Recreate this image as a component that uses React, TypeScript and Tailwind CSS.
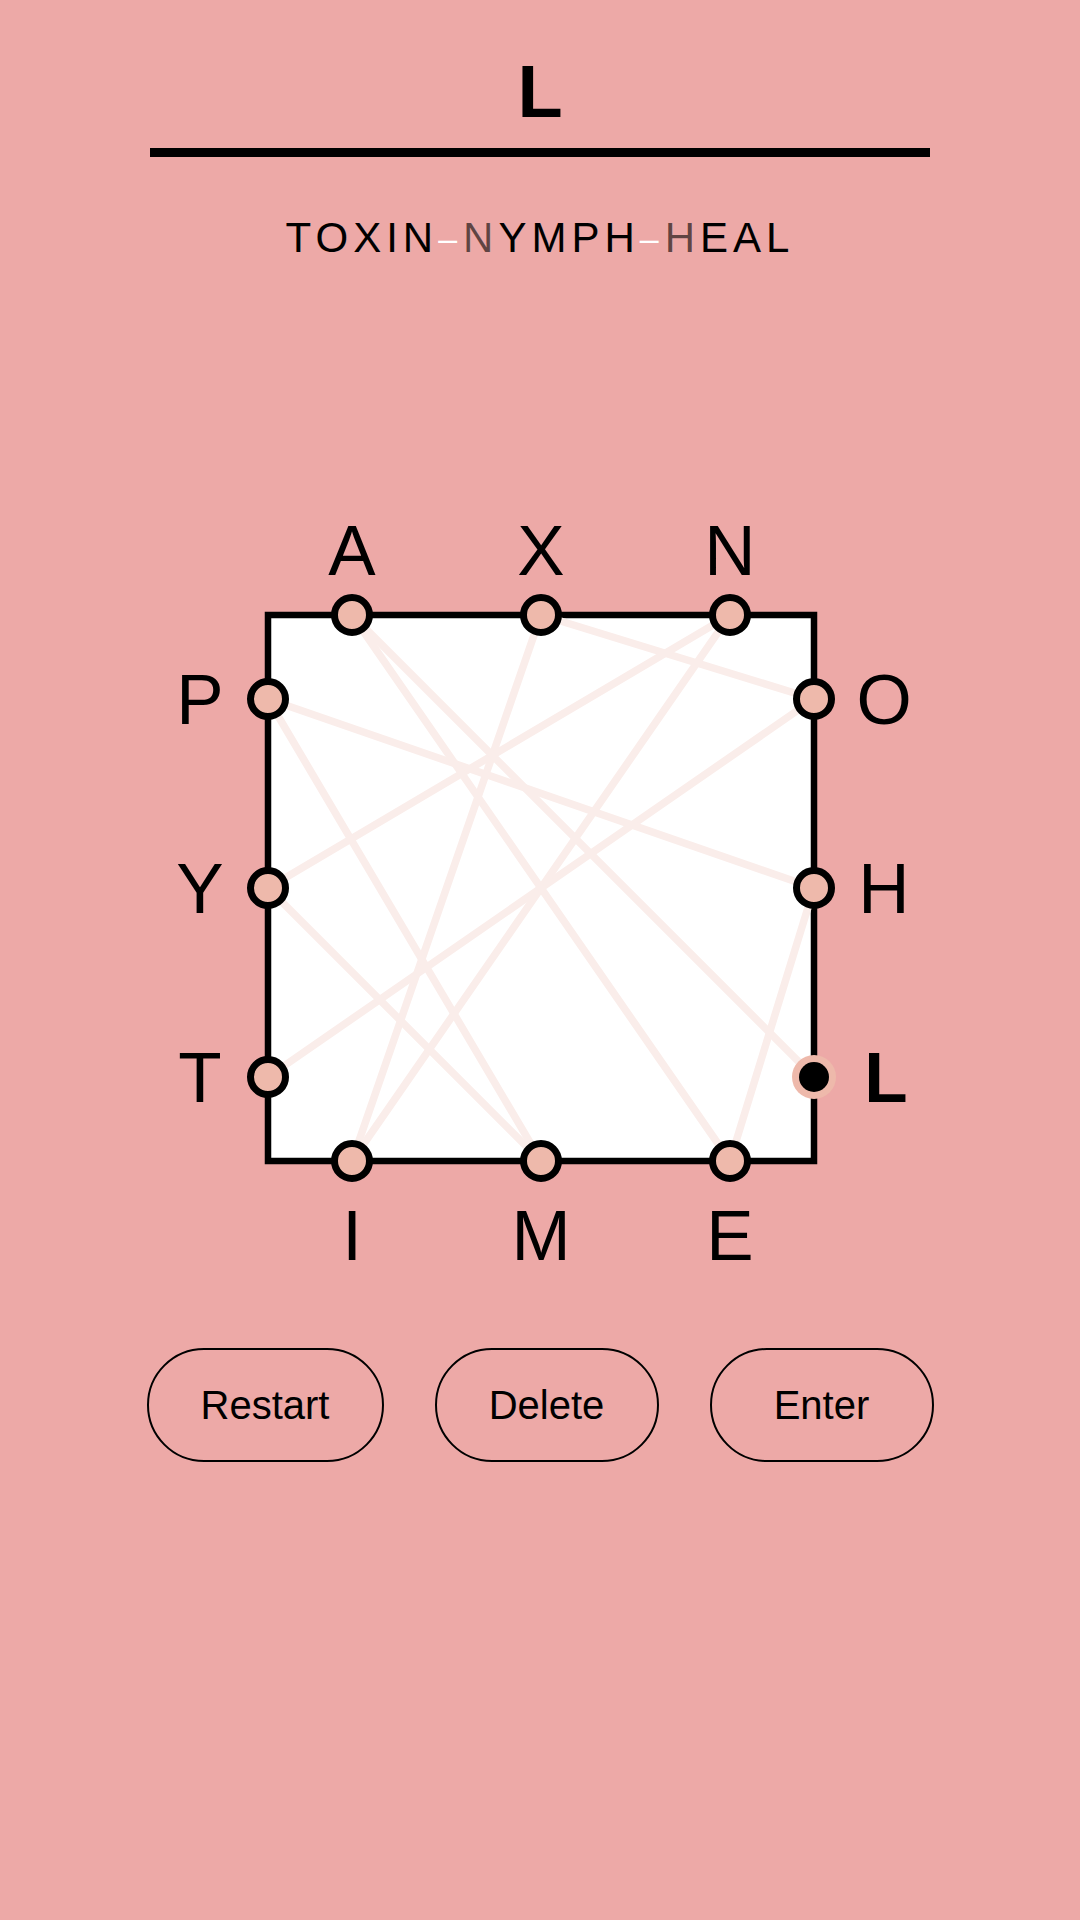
import React from "react";

type P = { x: number; y: number };

const pts: Record<string, P> = {
  A: { x: 212, y: 124 },
  X: { x: 401, y: 124 },
  N: { x: 590, y: 124 },
  P: { x: 128, y: 208 },
  Y: { x: 128, y: 397 },
  T: { x: 128, y: 586 },
  O: { x: 674, y: 208 },
  H: { x: 674, y: 397 },
  L: { x: 674, y: 586 },
  I: { x: 212, y: 670 },
  M: { x: 401, y: 670 },
  E: { x: 590, y: 670 },
};

const path = ["T", "O", "X", "I", "N", "Y", "M", "P", "H", "E", "A", "L"];

const labels: { k: string; x: number; y: number; bold?: boolean }[] = [
  { k: "A", x: 212, y: 84 },
  { k: "X", x: 401, y: 84 },
  { k: "N", x: 590, y: 84 },
  { k: "P", x: 60, y: 233 },
  { k: "Y", x: 60, y: 422 },
  { k: "T", x: 60, y: 611 },
  { k: "O", x: 744, y: 233 },
  { k: "H", x: 744, y: 422 },
  { k: "L", x: 746, y: 611, bold: true },
  { k: "I", x: 212, y: 769 },
  { k: "M", x: 401, y: 769 },
  { k: "E", x: 590, y: 769 },
];

function Board() {
  return (
    <svg width={800} height={800} viewBox="0 0 800 800" className="block">
      <rect x={128} y={124} width={546} height={546} fill="#ffffff" stroke="#000" strokeWidth={6.5} />
      {path.slice(1).map((k, i) => {
        const a = pts[path[i]];
        const b = pts[k];
        return (
          <line key={i} x1={a.x} y1={a.y} x2={b.x} y2={b.y} stroke="#FAEDEA" strokeWidth={7.5} strokeLinecap="round" />
        );
      })}
      {Object.entries(pts).map(([k, p]) =>
        k === "L" ? (
          <g key={k}>
            <circle cx={p.x} cy={p.y} r={22} fill="#EEB9AB" />
            <circle cx={p.x} cy={p.y} r={15} fill="#000" />
          </g>
        ) : (
          <circle key={k} cx={p.x} cy={p.y} r={17.5} fill="#EEB9AB" stroke="#000" strokeWidth={7} />
        )
      )}
      {labels.map((l) => (
        <text
          key={l.k}
          x={l.x}
          y={l.y}
          textAnchor="middle"
          fontFamily="'Liberation Sans', Arial, sans-serif"
          fontSize={71}
          fontWeight={l.bold ? 700 : 400}
          fill="#000"
        >
          {l.k}
        </text>
      ))}
    </svg>
  );
}

export default function App() {
  return (
    <div
      className="w-[1080px] h-[1920px] bg-[#EDA9A7] flex flex-col items-center"
      style={{ fontFamily: "'Liberation Sans', Arial, sans-serif" }}
    >
      <div className="pt-[55px] text-[74px] leading-[74px] font-bold text-black">L</div>
      <div className="mt-[19px] w-[780px] h-[9px] bg-black" />
      <div className="mt-[60px] h-[42px] text-[42px] leading-[42px] tracking-[5px] text-black">
        <span>TOXIN</span>
        <span className="relative -top-[2px] text-white text-[34px] leading-none tracking-[6px]">–</span>
        <span className="text-black/60">N</span>
        <span>YMPH</span>
        <span className="relative -top-[2px] text-white text-[34px] leading-none tracking-[6px]">–</span>
        <span className="text-black/60">H</span>
        <span>EAL</span>
      </div>
      <div className="mt-[232px]">
        <Board />
      </div>
      <div className="mt-[57px] flex gap-[51px]">
        <button className="w-[237px] h-[114px] rounded-full border-2 border-black text-[40px] text-black">
          Restart
        </button>
        <button className="w-[224px] h-[114px] rounded-full border-2 border-black text-[40px] text-black">
          Delete
        </button>
        <button className="w-[224px] h-[114px] rounded-full border-2 border-black text-[40px] text-black">
          Enter
        </button>
      </div>
    </div>
  );
}
